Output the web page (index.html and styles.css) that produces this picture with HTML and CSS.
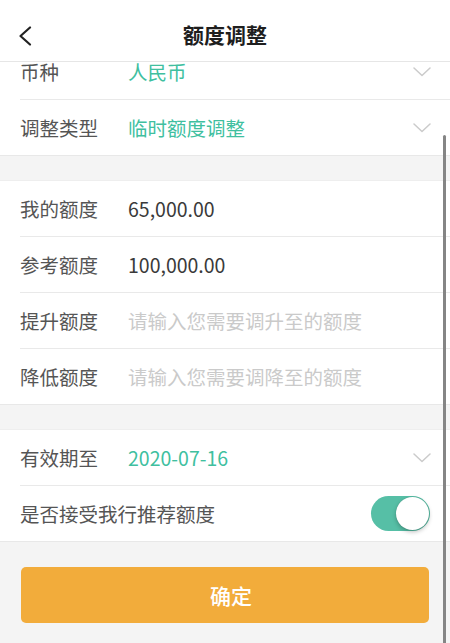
FILE: index.html
```html
<!DOCTYPE html>
<html lang="zh-CN">
<head>
<meta charset="utf-8">
<title>额度调整</title>
<link rel="stylesheet" href="styles.css">
</head>
<body>
<div class="app">
  <header class="nav">
    <span class="back" aria-label="返回">
      <svg width="16" height="20" viewBox="0 0 16 20"><path d="M13 1.5 L3.5 10 L13 18.5" fill="none" stroke="#222" stroke-width="2.2" stroke-linecap="round" stroke-linejoin="round"/></svg>
    </span>
    <h1 class="title">额度调整</h1>
  </header>
  <main class="viewport">
    <div class="content">
      <section class="group">
        <div class="row">
          <span class="label">币种</span>
          <span class="value accent">人民币</span>
          <svg class="chev" width="18" height="10" viewBox="0 0 18 10"><path d="M1 1 L9 8.5 L17 1" fill="none" stroke="#cbcbcb" stroke-width="1.5" stroke-linecap="round" stroke-linejoin="round"/></svg>
        </div>
        <div class="row">
          <span class="label">调整类型</span>
          <span class="value accent">临时额度调整</span>
          <svg class="chev" width="18" height="10" viewBox="0 0 18 10"><path d="M1 1 L9 8.5 L17 1" fill="none" stroke="#cbcbcb" stroke-width="1.5" stroke-linecap="round" stroke-linejoin="round"/></svg>
        </div>
      </section>
      <section class="group">
        <div class="row">
          <span class="label">我的额度</span>
          <span class="value">65,000.00</span>
        </div>
        <div class="row">
          <span class="label">参考额度</span>
          <span class="value">100,000.00</span>
        </div>
        <div class="row">
          <span class="label">提升额度</span>
          <span class="value placeholder">请输入您需要调升至的额度</span>
        </div>
        <div class="row">
          <span class="label">降低额度</span>
          <span class="value placeholder">请输入您需要调降至的额度</span>
        </div>
      </section>
      <section class="group">
        <div class="row">
          <span class="label">有效期至</span>
          <span class="value accent">2020-07-16</span>
          <svg class="chev" width="18" height="10" viewBox="0 0 18 10"><path d="M1 1 L9 8.5 L17 1" fill="none" stroke="#cbcbcb" stroke-width="1.5" stroke-linecap="round" stroke-linejoin="round"/></svg>
        </div>
        <div class="row">
          <span class="label wide">是否接受我行推荐额度</span>
          <span class="switch on"><span class="knob"></span></span>
        </div>
      </section>
      <div class="actions">
        <button class="btn">确定</button>
      </div>
    </div>
    <div class="scrollbar"></div>
  </main>
</div>
</body>
</html>
```

FILE: styles.css
```css
* { box-sizing: border-box; }
html, body {
  margin: 0;
  padding: 0;
  height: 100%;
}
body {
  font-family: "Noto Sans CJK SC", "Noto Sans", sans-serif;
  background: #f4f4f4;
  color: #555;
  overflow: hidden;
}
.app {
  width: 450px;
  height: 643px;
  display: flex;
  flex-direction: column;
}
.nav {
  position: relative;
  z-index: 2;
  height: 62px;
  padding-top: 7px;
  background: #fff;
  border-bottom: 1px solid #e6e6e6;
  display: flex;
  align-items: center;
  justify-content: center;
  flex-shrink: 0;
}
.back {
  position: absolute;
  left: 17px;
  top: 26px;
  display: flex;
}
.title {
  margin: 0;
  font-size: 21px;
  font-weight: 700;
  color: #1e1e1e;
  line-height: 1;
}
.viewport {
  position: relative;
  flex: 1;
  overflow: hidden;
}
.content {
  margin-top: -18px;
  display: flex;
  flex-direction: column;
  gap: 25px;
}
.group {
  background: #fff;
  border-bottom: 1px solid #e8e8e8;
  box-shadow: 0 -1px 0 #eeeeee;
  padding-left: 20px;
}
.row {
  height: 56px;
  display: flex;
  align-items: center;
  border-bottom: 1px solid #e9e9e9;
  padding-right: 19px;
  font-size: 19.5px;
  line-height: 1;
}
.row:last-child {
  border-bottom: none;
  height: 55px;
}
.label {
  width: 108px;
  flex-shrink: 0;
  color: #555;
}
.label.wide {
  width: auto;
  flex: 1;
}
.value {
  flex: 1;
  color: #3a3a3a;
}
.value.accent { color: #40bf9f; }
.value.placeholder { color: #cacaca; }
.chev {
  flex-shrink: 0;
}
.switch {
  width: 59px;
  height: 35px;
  border-radius: 18px;
  background: #56bfa6;
  position: relative;
  flex-shrink: 0;
  margin-right: 1px;
}
.switch .knob {
  position: absolute;
  right: 1px;
  top: 1px;
  width: 33px;
  height: 33px;
  border-radius: 50%;
  background: #fff;
  box-shadow: 0 2px 4px rgba(0,0,0,0.25), 0 0 1px rgba(0,0,0,0.2);
}
.actions {
  padding: 0 21px;
}
.btn {
  width: 100%;
  height: 56px;
  border: none;
  border-radius: 5px;
  background: #f2ac3b;
  color: #fff;
  font-family: inherit;
  font-size: 21px;
  font-weight: 500;
  padding: 0 0 0 12px;
}
.scrollbar {
  position: absolute;
  right: 4px;
  top: 73px;
  width: 3px;
  height: 600px;
  border-radius: 2px;
  background: #858585;
}
```
